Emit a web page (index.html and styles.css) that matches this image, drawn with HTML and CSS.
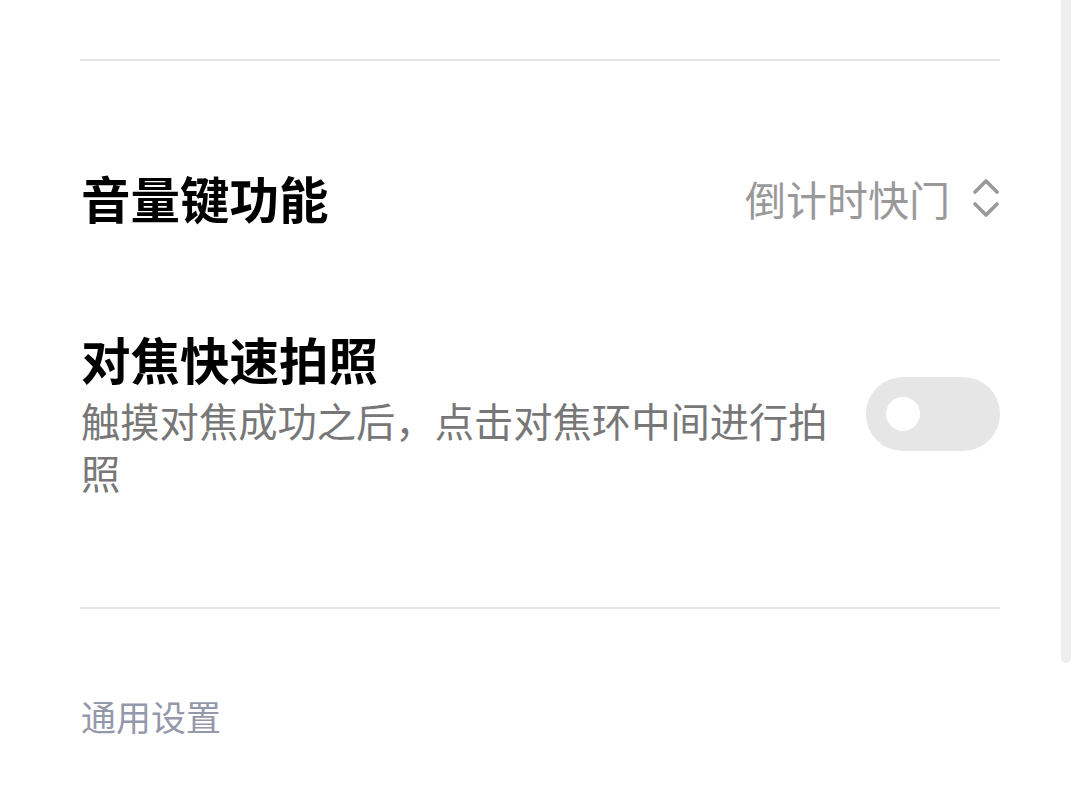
FILE: index.html
```html
<!DOCTYPE html>
<html lang="zh-CN">
<head>
<meta charset="utf-8">
<title>设置</title>
<link rel="stylesheet" href="styles.css">
</head>
<body>
<div class="page">
  <div class="top-space"></div>
  <div class="divider"></div>
  <div class="row row-volume">
    <div class="title">音量键功能</div>
    <div class="value">
      <span class="value-text">倒计时快门</span>
      <svg class="updown" width="28" height="42" viewBox="0 0 28 42">
        <polyline points="3,13 14,2 25,13" fill="none" stroke="#999" stroke-width="3.6" stroke-linecap="round" stroke-linejoin="round"/>
        <polyline points="3,25 14,36 25,25" fill="none" stroke="#999" stroke-width="3.6" stroke-linecap="round" stroke-linejoin="round"/>
      </svg>
    </div>
  </div>
  <div class="row row-focus">
    <div class="texts">
      <div class="title">对焦快速拍照</div>
      <div class="subtitle">触摸对焦成功之后，点击对焦环中间进行拍照</div>
    </div>
    <div class="toggle"><div class="knob"></div></div>
  </div>
  <div class="divider"></div>
  <div class="section-header">通用设置</div>
</div>
<div class="scrollbar"></div>
</body>
</html>
```

FILE: styles.css
```css
html, body {
  margin: 0;
  padding: 0;
  background: #ffffff;
}
body {
  font-family: "Noto Sans CJK SC", "Noto Sans", sans-serif;
  width: 1080px;
  height: 811px;
  overflow: hidden;
  position: relative;
}
.page {
  margin-left: 80px;
  width: 920px;
}
.top-space {
  height: 59px;
}
.divider {
  height: 2px;
  background: #e5e5e5;
}
.row {
  display: flex;
  justify-content: space-between;
}
.row-volume {
  margin-top: 109px;
  align-items: center;
}
.title {
  font-size: 49.5px;
  font-weight: 700;
  line-height: 56px;
  color: #000;
  padding-left: 1px;
}
.value {
  display: flex;
  align-items: center;
  gap: 22px;
}
.value-text {
  font-size: 41px;
  line-height: 56px;
  color: #999999;
}
.updown {
  display: block;
  margin-top: 4px;
}
.row-focus {
  margin-top: 105px;
  align-items: flex-start;
}
.texts {
  width: 780px;
}
.subtitle {
  margin-top: 7px;
  font-size: 39.3px;
  line-height: 52px;
  color: #777777;
  padding-left: 1px;
}
.toggle {
  margin-top: 46px;
  width: 134px;
  height: 74px;
  border-radius: 37px;
  background: #e6e6e6;
  display: flex;
  align-items: center;
  padding-left: 20px;
  box-sizing: border-box;
}
.knob {
  width: 34px;
  height: 34px;
  border-radius: 50%;
  background: #ffffff;
}
.row-focus + .divider {
  margin-top: 109px;
}
.section-header {
  margin-top: 85px;
  font-size: 35px;
  line-height: 44px;
  color: #9498ab;
  padding-left: 1px;
}
.scrollbar {
  position: absolute;
  top: 0;
  right: 9px;
  width: 10px;
  height: 663px;
  background: #eeeeee;
  border-radius: 0 0 5px 5px;
}
```
